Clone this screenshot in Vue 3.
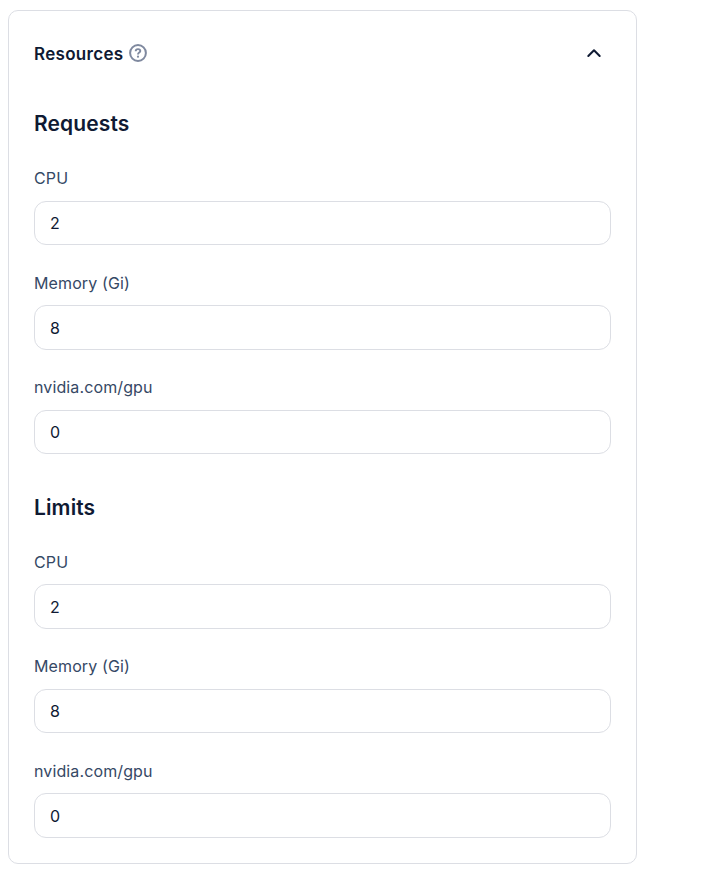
<script setup>
import { ref } from 'vue'

const expanded = ref(true)

const groups = ref([
  {
    id: 'requests',
    title: 'Requests',
    fields: [
      { id: 'cpu', label: 'CPU', value: '2' },
      { id: 'memory', label: 'Memory (Gi)', value: '8' },
      { id: 'gpu', label: 'nvidia.com/gpu', value: '0' }
    ]
  },
  {
    id: 'limits',
    title: 'Limits',
    fields: [
      { id: 'cpu', label: 'CPU', value: '2' },
      { id: 'memory', label: 'Memory (Gi)', value: '8' },
      { id: 'gpu', label: 'nvidia.com/gpu', value: '0' }
    ]
  }
])

const toggle = () => {
  expanded.value = !expanded.value
}
</script>

<template>
  <section class="card">
    <header class="card__header">
      <span class="card__title">Resources</span>
      <svg class="card__help" viewBox="0 0 18 18" fill="none">
        <circle cx="9" cy="9" r="7.9" stroke="currentColor" stroke-width="2" />
        <path d="M6.7 7.3C6.7 5.9 7.7 5.1 9 5.1s2.3.8 2.3 2c0 1.5-2.3 1.5-2.3 3.3"
              stroke="currentColor" stroke-width="1.9" />
        <circle cx="9" cy="12.7" r="1.1" fill="currentColor" />
      </svg>
      <button class="card__toggle" type="button" aria-label="Toggle" @click="toggle">
        <svg class="card__chevron" :class="{ 'card__chevron--closed': !expanded }" viewBox="0 0 16 10" fill="none">
          <path d="M2.3 8L8 2.2 13.7 8" stroke="currentColor" stroke-width="2" stroke-linecap="round" stroke-linejoin="round" />
        </svg>
      </button>
    </header>
    <div v-if="expanded" class="card__body">
      <div v-for="group in groups" :key="group.id" class="group">
        <h3 class="group__title">{{ group.title }}</h3>
        <div class="group__fields">
          <div v-for="field in group.fields" :key="field.id" class="field">
            <label class="field__label" :for="`${group.id}-${field.id}`">{{ field.label }}</label>
            <input :id="`${group.id}-${field.id}`" v-model="field.value" class="field__input" type="text">
          </div>
        </div>
      </div>
    </div>
  </section>
</template>

<style>
body {
  background: #fff;
}
</style>

<style scoped>
.card {
  box-sizing: border-box;
  width: 629px;
  height: 854px;
  margin: 10px 0 0 8px;
  padding: 25px;

  border: 1px solid #dcdee4;
  border-radius: 10px;

  font-family: Inter, "Liberation Sans", sans-serif;
  color: #0f1a33;
}

.card__header {
  display: flex;
  align-items: center;
  height: 34px;
}

.card__title {
  padding-top: 2px;
  font-size: 17px;
  font-weight: 600;
  line-height: 24px;
  letter-spacing: 0.3px;
}

.card__help {
  width: 18px;
  height: 18px;
  margin-left: 5.3px;
  color: #7f899f;
}

.card__toggle {
  display: flex;
  margin-left: auto;
  margin-right: 9px;
  padding: 0;
  border: none;
  background: none;
  color: inherit;
}

.card__chevron {
  width: 16px;
  height: 10px;
}

.card__chevron--closed {
  transform: rotate(180deg);
}

.card__body {
  display: flex;
  flex-direction: column;
  gap: 38.7px;
  padding-top: 39px;
}

.group__title {
  margin: 0 0 27.4px;
  font-size: 21px;
  font-weight: 600;
  line-height: 30px;
  letter-spacing: 0.12px;
}

.group__fields {
  display: flex;
  flex-direction: column;
  gap: 25.6px;
}

.field {
  display: flex;
  flex-direction: column;
  gap: 10.4px;
}

.field__label {
  font-size: 16px;
  line-height: 24px;
  letter-spacing: 0.12px;
  color: #354865;
}

.field__input {
  box-sizing: border-box;
  width: 100%;
  height: 44.4px;
  padding: 0.6px 15px 0;

  border: 1px solid #dcdee4;
  border-radius: 12px;
  outline: none;
  background: #fff;

  font-family: inherit;
  font-size: 16px;
  color: #0f1a33;
}
</style>
